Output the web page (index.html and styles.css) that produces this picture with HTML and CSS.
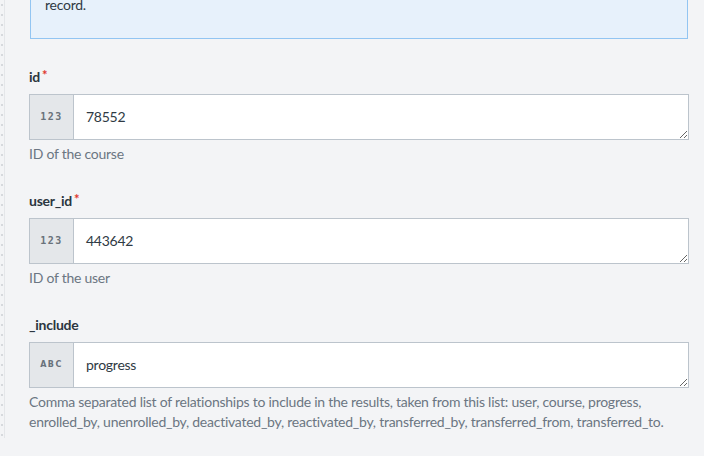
FILE: index.html
```html
<!DOCTYPE html>
<html>
<head>
<meta charset="utf-8">
<link rel="stylesheet" href="styles.css">
</head>
<body>
<div class="page">
  <div class="panel">
    <div class="info">record.</div>

    <div class="field field-first">
      <div class="label">id<span class="req">*</span></div>
      <div class="group">
        <div class="prefix prefix-num">123</div>
        <textarea class="value" rows="1">78552</textarea>
      </div>
      <div class="help">ID of the course</div>
    </div>

    <div class="field">
      <div class="label">user_id<span class="req">*</span></div>
      <div class="group">
        <div class="prefix prefix-num">123</div>
        <textarea class="value" rows="1">443642</textarea>
      </div>
      <div class="help">ID of the user</div>
    </div>

    <div class="field">
      <div class="label">_include</div>
      <div class="group">
        <div class="prefix prefix-abc">ABC</div>
        <textarea class="value" rows="1">progress</textarea>
      </div>
      <div class="help">Comma separated list of relationships to include in the results, taken from this list: user, course, progress, enrolled_by, unenrolled_by, deactivated_by, reactivated_by, transferred_by, transferred_from, transferred_to.</div>
    </div>
  </div>
</div>
</body>
</html>
```
FILE: styles.css
```css
html, body {
  margin: 0;
  padding: 0;
  height: 100%;
  overflow: hidden;
  background: #f3f4f6;
}
body {
  font-family: "Lato", "Open Sans", sans-serif;
  font-size: 14px;
  line-height: 20px;
  letter-spacing: -0.25px;
  color: #2f3a44;
}
.page {
  padding-left: 4px;
  height: 100%;
  background-image: repeating-linear-gradient(to bottom, #d6d9dd 0 2px, transparent 2px 10px);
  background-size: 2px 100%;
  background-position: 1px 2px;
  background-repeat: no-repeat;
}
.panel {
  border-left: 1px solid #e4e6e9;
  height: 100%;
  padding-left: 24px;
  width: 660px;
}
.info {
  margin-top: -18px;
  margin-left: 1px;
  margin-right: 1px;
  padding: 12px 14px 23px;
  background: #e7f1fb;
  border: 1px solid #92c5f2;
  color: #2f3a44;
}
.field {
  margin-top: 27px;
}
.field-first {
  margin-top: 28px;
}
.label {
  font-weight: 700;
  color: #2b3640;
}
.req {
  color: #e0362c;
  font-size: 13px;
  margin-left: 2px;
  position: relative;
  top: -2px;
}
.group {
  margin-top: 7px;
  display: flex;
  border: 1px solid #bcc4cc;
  background: #fff;
}
.prefix {
  width: 43px;
  flex: none;
  background: #e4e7ea;
  border-right: 1px solid #bcc4cc;
  display: flex;
  align-items: center;
  justify-content: center;
  color: #69727b;
  font-weight: 700;
  letter-spacing: 0;
}
.prefix-num {
  font-family: "DejaVu Sans Mono", monospace;
  font-size: 10px;
  letter-spacing: 1.5px;
}
.prefix-abc {
  font-family: "DejaVu Sans", sans-serif;
  font-size: 8px;
  letter-spacing: 1.5px;
}
.value {
  flex: 1;
  border: none;
  outline: none;
  margin: 0;
  padding: 12px 12px;
  height: 44px;
  box-sizing: border-box;
  font-family: inherit;
  font-size: 14px;
  line-height: 20px;
  letter-spacing: -0.25px;
  color: #2f3a44;
  background: #fff;
  resize: vertical;
  overflow: hidden;
}
.help {
  margin-top: 4px;
  color: #6b7682;
}
```
